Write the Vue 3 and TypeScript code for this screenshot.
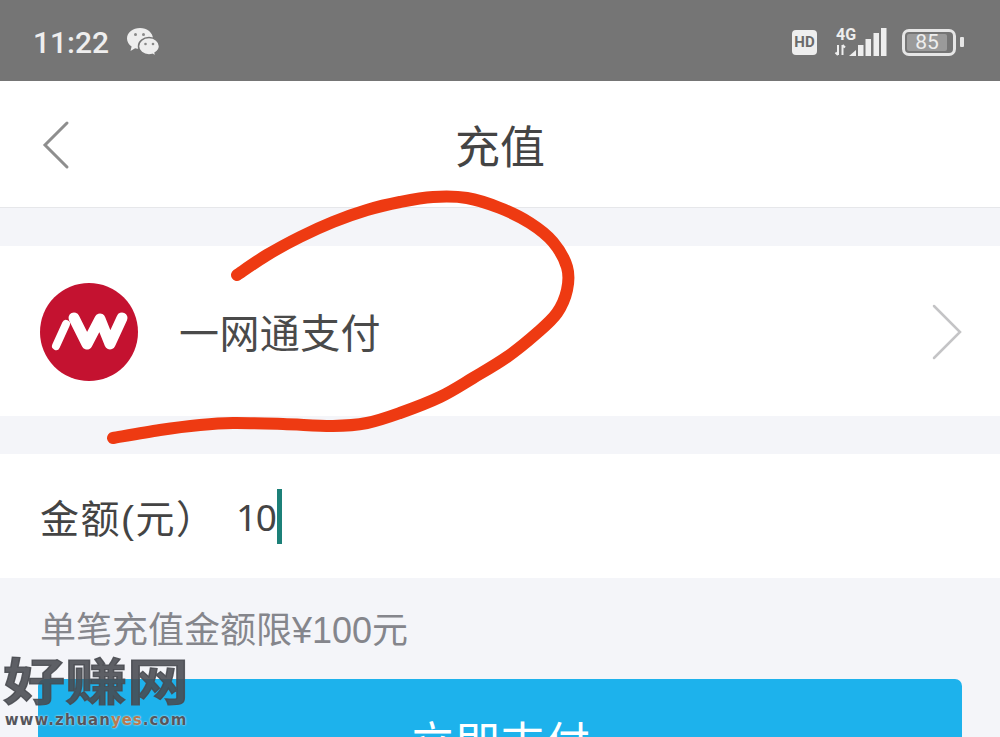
<script setup lang="ts">
const bars = [
  { x: 24, h: 11 },
  { x: 31.5, h: 17 },
  { x: 39.5, h: 23 },
  { x: 47, h: 28 }
]

// hand-drawn red circle, traced as points and smoothed below
const strokePoints: [number, number][] = [
  [237, 275], [267, 255], [300, 237], [333, 222], [367, 210], [400, 202],
  [433, 197], [467, 198], [500, 208], [530, 223], [553, 242], [567, 267],
  [567, 290], [557, 313], [537, 333], [507, 357], [473, 378], [440, 397],
  [400, 413], [367, 423], [333, 426], [283, 424], [233, 423], [200, 425],
  [160, 430], [113, 438]
]

function smoothPath(pts: [number, number][]): string {
  let d = `M${pts[0][0]} ${pts[0][1]}`
  for (let i = 0; i < pts.length - 1; i++) {
    const p0 = pts[Math.max(i - 1, 0)]
    const p1 = pts[i]
    const p2 = pts[i + 1]
    const p3 = pts[Math.min(i + 2, pts.length - 1)]
    const c1x = p1[0] + (p2[0] - p0[0]) / 6
    const c1y = p1[1] + (p2[1] - p0[1]) / 6
    const c2x = p2[0] - (p3[0] - p1[0]) / 6
    const c2y = p2[1] - (p3[1] - p1[1]) / 6
    d += `C${c1x} ${c1y} ${c2x} ${c2y} ${p2[0]} ${p2[1]}`
  }
  return d
}

const scribblePath = smoothPath(strokePoints)
</script>

<template>
  <div class="page">
    <header class="status-bar">
      <div class="status-left">
        <span class="time">11:22</span>
        <svg class="wechat" width="34" height="30" viewBox="0 0 34 30">
          <path d="M14 1C7 1 1 5.600 1 11.500c0 3.300 1.800 6.100 4.600 8L4.500 24l4.600-2.700c1.600.5 3.200.7 4.900.7 7 0 13-4.700 13-10.500S21 1 14 1z" fill="#eeeeee" />
          <path d="M23 10.500c-5.800 0-10.500 3.900-10.500 8.700s4.700 8.700 10.500 8.700c1.200 0 2.300-.2 3.400-.5l3.600 2-.9-3.500c2.700-1.600 4.400-3.900 4.400-6.700 0-4.800-4.700-8.700-10.500-8.700z" fill="#eeeeee" stroke="#757575" stroke-width="1.500" />
          <circle cx="9.500" cy="7.500" r="1.500" fill="#8a8a8a" />
          <circle cx="17.500" cy="7.500" r="1.500" fill="#8a8a8a" />
          <circle cx="19.500" cy="17" r="1.300" fill="#8a8a8a" />
          <circle cx="27" cy="17" r="1.300" fill="#8a8a8a" />
        </svg>
      </div>
      <div class="status-right">
        <span class="hd">HD</span>
        <svg class="signal" width="54" height="38" viewBox="0 -4 54 38">
          <text x="2" y="13" class="signal-label">4G</text>
          <path d="M4 18v10M1.500 25.500 4 28M8.500 28V18M8.500 18l2.500 2.500" stroke="#eeeeee" stroke-width="2" fill="none" />
          <path d="M15 29 22 23v6z" fill="#eeeeee" />
          <rect v-for="bar in bars" :key="bar.x" :x="bar.x" :y="29 - bar.h" width="5.500" :height="bar.h" fill="#eeeeee" />
        </svg>
        <div class="battery">
          <div class="battery-body">
            <span class="battery-level">85</span>
          </div>
          <span class="battery-nub"></span>
        </div>
      </div>
    </header>

    <nav class="nav-bar">
      <svg class="nav-back" width="30" height="50" viewBox="0 0 30 50">
        <path d="M26 3 4 25l22 22" fill="none" stroke="#8e8e8e" stroke-width="3" stroke-linecap="round" />
      </svg>
      <h1 class="nav-title">充值</h1>
    </nav>

    <section class="pay-row">
      <svg class="pay-logo" width="98" height="98" viewBox="0 0 98 98">
        <circle cx="49" cy="49" r="49" fill="#c41230" />
        <path d="M16 63 26 41" stroke="#fff" stroke-width="8" stroke-linecap="round" fill="none" />
        <path d="M34 35 47 61 60 36 70 61 82 35" stroke="#fff" stroke-width="11" stroke-linecap="round" stroke-linejoin="round" fill="none" />
      </svg>
      <span class="pay-name">一网通支付</span>
      <svg class="pay-arrow" width="30" height="56" viewBox="0 0 30 56">
        <path d="M2 2 28 28 2 54" fill="none" stroke="#c4c4c6" stroke-width="2.500" stroke-linecap="round" />
      </svg>
    </section>

    <section class="amount-row">
      <span class="amount-label">金额(元）</span>
      <span class="amount-value">10</span>
      <span class="caret"></span>
    </section>

    <p class="hint">单笔充值金额限¥100元</p>

    <button class="pay-button" type="button">立即支付</button>

    <svg class="scribble" width="1000" height="737" viewBox="0 0 1000 737">
      <path
        :d="scribblePath"
        fill="none"
        stroke="#ee3a12"
        stroke-width="12"
        stroke-linecap="round"
        stroke-linejoin="round"
      />
    </svg>

    <div class="watermark">
      <div class="watermark-name">好赚网</div>
      <div class="watermark-url">www.zhuan<span class="watermark-accent">yes</span>.com</div>
    </div>
  </div>
</template>

<style scoped>
.page {
  position: relative;
  width: 1000px;
  height: 737px;
  overflow: hidden;
  display: flex;
  flex-direction: column;
  background: #f4f5f9;
  font-family: "Liberation Sans", "Noto Sans CJK SC", sans-serif;
  color: #444444;
}

.status-bar {
  height: 81px;
  flex-shrink: 0;
  box-sizing: border-box;
  padding: 3px 36px 0 33px;
  display: flex;
  align-items: center;
  justify-content: space-between;
  background: #757575;
}

.status-left {
  display: flex;
  align-items: center;
  gap: 17px;
}

.time {
  font-family: Roboto, sans-serif;
  font-size: 30px;
  font-weight: 500;
  color: #eeeeee;
}

.status-right {
  display: flex;
  align-items: center;
}

.hd {
  width: 25px;
  height: 25px;
  border-radius: 4px;
  display: flex;
  align-items: center;
  justify-content: center;
  background: #eeeeee;
  color: #6a6a6a;
  font-family: Roboto, sans-serif;
  font-size: 15px;
  font-weight: 700;
  margin-right: 17px;
}

.signal {
  margin-right: 14px;
}

.signal-label {
  font-family: Roboto, sans-serif;
  font-size: 16px;
  font-weight: 700;
  fill: #eeeeee;
}

.battery {
  display: flex;
  align-items: center;
  gap: 4px;
}

.battery-body {
  width: 54px;
  height: 27px;
  box-sizing: border-box;
  border: 3px solid #e6e6e6;
  border-radius: 7px;
  padding: 2px;
  display: flex;
}

.battery-level {
  flex: 1;
  margin-right: 4px;
  background: #9a9a9a;
  border-radius: 2px;
  text-align: center;
  font-family: Roboto, sans-serif;
  font-size: 21px;
  line-height: 17px;
  color: #eeeeee;
}

.battery-nub {
  width: 4px;
  height: 10px;
  border-radius: 1px;
  background: #e6e6e6;
}

.nav-bar {
  height: 127px;
  flex-shrink: 0;
  box-sizing: border-box;
  position: relative;
  display: flex;
  align-items: center;
  justify-content: center;
  background: #ffffff;
  border-bottom: 1px solid #e6e7ea;
}

.nav-back {
  position: absolute;
  left: 41px;
  top: 39px;
}

.nav-title {
  margin: 0;
  font-size: 45px;
  font-weight: 400;
  color: #444444;
}

.pay-row {
  height: 170px;
  flex-shrink: 0;
  box-sizing: border-box;
  margin-top: 38px;
  padding: 0 38px 0 40px;
  display: flex;
  align-items: center;
  background: #ffffff;
}

.pay-logo {
  margin-top: 2px;
}

.pay-name {
  flex: 1;
  margin-left: 41px;
  font-size: 40px;
  letter-spacing: 0.4px;
  color: #4a4a4a;
}

.pay-arrow {
  margin-top: 2px;
}

.amount-row {
  height: 124px;
  flex-shrink: 0;
  box-sizing: border-box;
  margin-top: 38px;
  padding: 0 40px;
  display: flex;
  align-items: center;
  background: #ffffff;
}

.amount-label {
  width: 196px;
  font-size: 39px;
  letter-spacing: 1.500px;
  white-space: nowrap;
  color: #444444;
}

.amount-value {
  font-family: "Noto Sans", sans-serif;
  font-size: 37px;
  letter-spacing: -1.500px;
  color: #444444;
}

.caret {
  width: 5px;
  height: 55px;
  margin-left: 2px;
  background: #1c8078;
}

.hint {
  margin: 30px 0 0;
  padding-left: 40px;
  font-size: 36px;
  line-height: 46px;
  color: #85868c;
}

.pay-button {
  height: 120px;
  flex-shrink: 0;
  margin: 25px 38px 0;
  padding: 12px 0 0;
  border: none;
  border-radius: 7px;
  display: block;
  background: #1db2ec;
  color: #ffffff;
  font-family: inherit;
  font-size: 45px;
  line-height: 60px;
  text-align: center;
  align-self: stretch;
  align-content: start;
}

.scribble {
  position: absolute;
  left: 0;
  top: 0;
  pointer-events: none;
}

.watermark {
  position: absolute;
  left: 3px;
  top: 654px;
  width: 186px;
  text-align: center;
}

.watermark-name {
  font-size: 62px;
  font-weight: 700;
  line-height: 58px;
  color: rgba(72, 74, 80, 0.88);
  -webkit-text-stroke: 1.500px rgba(72, 74, 80, 0.88);
  transform: scaleY(0.8);
}

.watermark-url {
  font-family: "DejaVu Sans", sans-serif;
  font-size: 15px;
  font-weight: 700;
  line-height: 16px;
  letter-spacing: 1px;
  color: #55565c;
  text-shadow: 0 0 2px #ffffff;
}

.watermark-accent {
  color: #b77a50;
}
</style>
